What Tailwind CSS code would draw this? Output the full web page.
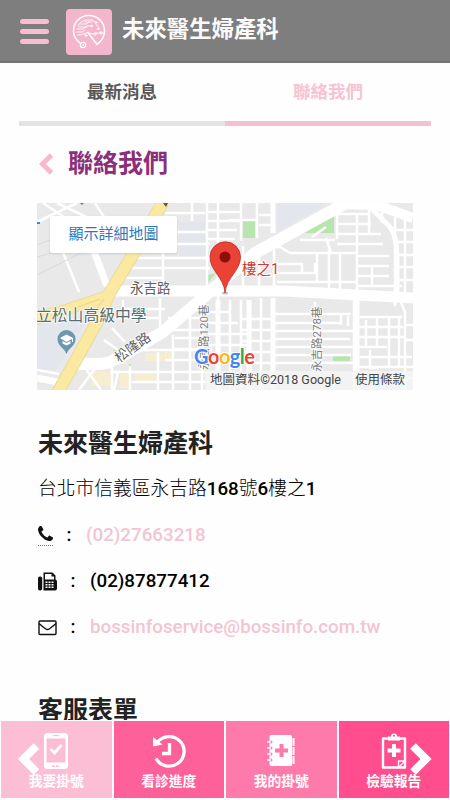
<!DOCTYPE html>
<html lang="zh-Hant">
  <head>
    <meta charset="UTF-8" />
    <meta name="viewport" content="width=device-width, initial-scale=1.0" />
    <title>未來醫生婦產科</title>
    <script src="https://cdn.jsdelivr.net/npm/@tailwindcss/browser@4"></script>
  </head>
  <body class="bg-[#fefefe] font-['Roboto','Noto_Sans_CJK_TC',sans-serif]">
    <div class="relative h-[800px] w-[450px] overflow-hidden">
      <!-- Top bar -->
      <header class="flex h-[63px] items-center border-b-2 border-[#737373] bg-[#7e7e7e] pl-5">
        <button class="mt-[2px] flex w-[29px] flex-col gap-[5px]" aria-label="選單">
          <span class="h-[5px] rounded-full bg-[#f9bdd0]"></span>
          <span class="h-[5px] rounded-full bg-[#f9bdd0]"></span>
          <span class="h-[5px] rounded-full bg-[#f9bdd0]"></span>
        </button>
        <svg class="mt-[2px] ml-[17px] h-[46px] w-[46px] rounded-[4px] bg-[#f3b6cd]" viewBox="0 0 46 46" fill="none" stroke="#fff" stroke-linecap="round" stroke-linejoin="round">
          <path stroke-width="1.500" d="M14.500 34.500C10 31 7.500 27 7.500 22C7.500 13.500 14 6.500 23 6.500C32 6.500 38.500 13.500 38.500 22C38.500 27.500 35.500 32 31 35.500L22 23.500" />
          <circle cx="17" cy="36" r="2.700" stroke-width="1.200" />
          <circle cx="17" cy="36" r=".5" stroke-width=".8" />
          <path stroke-width=".8" d="M12 17q3-6 9-6h5l3 2M11 20h6l3-3h5M11 23h5l3-2M14 15h6l3-2M12 26l6-1 4-2M22 24l6 1M30 24h4M19 13h7M13 18h8M30 15l3 4" />
          <g stroke-width=".9">
            <circle cx="30" cy="13.500" r=".8" />
            <circle cx="25.500" cy="17" r=".8" />
            <circle cx="29" cy="25" r="1.200" />
            <circle cx="35" cy="24" r="1.200" />
            <circle cx="20" cy="26.500" r="1" />
            <circle cx="32" cy="20" r=".8" />
          </g>
        </svg>
        <h1 class="-mt-1 ml-[10px] text-[22.4px] leading-8 font-bold text-[#fafafa]">未來醫生婦產科</h1>
      </header>

      <!-- Tabs -->
      <nav class="mx-[19px] grid h-[61px] grid-cols-2 text-center text-[17.5px] leading-[58px] font-bold">
        <a href="#" class="border-b-[5px] border-[#e3e3e3] text-[#585858]">最新消息</a>
        <a href="#" class="border-b-[5px] border-[#f7c0d2] text-[#f7c3d3]">聯絡我們</a>
      </nav>

      <main class="px-[37px]">
        <div class="flex h-[79px] items-center">
          <svg class="ml-px h-[22px] w-[16px]" viewBox="0 0 16 22" fill="none" stroke="#f7b9d0" stroke-width="5">
            <path d="M13.500 2L4.500 11l9 9" />
          </svg>
          <h2 class="ml-[14px] text-[25px] leading-9 font-bold text-[#8c2f7b]">聯絡我們</h2>
        </div>

        <!-- Map, drawn in page coordinates -->
        <div class="relative h-[187px] w-[376px] overflow-hidden">
          <svg class="h-[187px] w-[376px]" viewBox="37 203 376 187" fill="none">
            <rect x="37" y="203" width="376" height="187" fill="#e9e9ea" />
            <path fill="#e3e6ec" d="M179 222h27v34h-27zM277 203h52l-52 29zM37 320h50l-30 50H37z" />
            <path fill="#f7edd0" d="M113 355h14v9h-14zM92 372h20v14H92zM120 374h10v14h-10zM135 372h24v10h-24zM145 353h18v8h-18zM164 352h8v10h-8z" />
            <path fill="#b7e5ad" d="M243 220h12v18h-12zM302 233l32-19v19zM208 275l8-2-8 10zM333 354h17v7h-17zM113 350l7-2-4 9zM129 364h2v5h-2z" />

            <!-- Side streets -->
            <g stroke="#fff" stroke-width="2.500">
              <path d="M37 222l40-19M43 203l30 20M57 203l40 19M95 203l18 28M62 250l17 42" />
              <path stroke-width="1" stroke="#d9d9da" d="M37 275l50-25M80 245l-43 12M37 245l30-12" />
              <path d="M165 213h40M177 232h30M160 244h50M132 258h78M125 268h85M122 278h40M163 250v36M192 203v18M207 203v85M218 203v82" />
              <path d="M207 212h34M207 221h34M207 230h30M207 239h28M241 203v38M257 203v35M273 203v29M243 246v42M259 246v42M274 243v48M229 220h28M259 215h14M259 225h14" />
              <path d="M280 247l10 6h40M283 243l-6 5M277 264h25v10M277 273h38v-10M277 282h80M300 240h35M317 253v30M329 250v40M340 252v40M326 238l5 15h26M357 213v80M337 214v25M312 237l14-10" />
              <path d="M337 214h32M337 224h34M337 234h44M337 244h46M357 256h32M357 266h32M357 276h32M357 286h45M369 205v30M382 203v20M395 206v100M405 210v82M395 230h18M395 242h18M395 255h18M395 267h18M395 280h18M372 266v20" />
              <path d="M123 300v10l10 8M123 309h42M115 318h45M160 298v35M168 318h38M160 330h45M175 338h32M172 349h40M136 350h76M165 360h45M110 372h105M132 382h80M112 328l13 14M104 340l14 10M173 335v55M190 315v75M202 303v87M158 352v38M130 366v24M112 366v24M118 372l-4 18M97 366l-18 24M83 365l18 25M37 370l22 4" />
              <path d="M218 296v94M230 300v90M241 300v90M250 302v88M261 298v92M208 312h23M208 323h30M208 334h40M208 345h42M241 319h32M241 330h32M241 341h32M241 352h32M241 363h32" />
              <path d="M273 314h78M273 323h68M273 331h80M273 339h77M273 347h81M273 355h78M273 363h80M315 302v61M341 315v10M354 298v92M348 316v10" />
              <path d="M357 317h45M357 327h46M357 337h47M357 347h30M357 357h55M357 367h56M366 320v26M377 318v30M389 318v32M370 350v18h8M389 350v18M399 318v50M400 300l5 12v78M406 325h7M406 340h7M357 378h56" />
            </g>

            <!-- Wider roads -->
            <g stroke="#fff" stroke-linejoin="round">
              <path stroke-width="5" d="M218 300v90M249 300v90M273 298v92M357 296v94M273 203v30" />
              <path stroke-width="7" d="M83 222l24 64M37 378l25 5" />
              <path stroke-width="5" d="M370 207l20 20q7 9 7 30v40" />
              <path stroke-width="11" d="M115 291h170l128 7" />
              <path stroke-width="12" d="M77 364h21q10 0 18-5l47-27 42-36 50-43 82-45 15-9" />
              <path stroke-width="10" d="M335 204l42 1 36 13" />
            </g>

            <!-- Highway -->
            <path stroke="#eadb9c" stroke-width="13" d="M163 202l-31 54-23 38-8 21-44 79" />
            <path fill="#eadb9c" d="M37 311l28-7 30-10 18-6-10 22-14-2-25 9-27 8z" />
            <path stroke="#fbe9a2" stroke-width="11" d="M163 202l-31 54-23 38-8 21-44 79" />
            <path fill="#fbe9a2" d="M37 312l28-7 30-10 18-6-10 20-14-2-25 9-27 8z" />
            <path stroke="#e8d58c" d="M104 299l-15 20M100 299l-22 8" />
            <path fill="#76502c" d="M163 203h5l-2 4z" />
            <path fill="#4b84c4" d="M80 203h4l-2 2zM37 222h3v2h-3z" />

            <!-- School marker -->
            <path fill="#6c97b0" d="M66.500 354c-2-6-9-8-9-15a9 9 0 0 1 18 0c0 7-7 9-9 15z" />
            <path fill="#fff" d="M60 338l6.500-3.500 6.500 3.500v4h-1v-3l-5.500 3zM62.500 341l4 2 4-2v2.500l-4 2-4-2z" />

            <!-- Map labels -->
            <g fill="#616161" stroke="#fff" stroke-width="2" stroke-opacity=".7" paint-order="stroke" font-size="13.500">
              <text x="130" y="293">永吉路</text>
              <text x="36" y="321" font-size="15.800" fill="#546e7a">立松山高級中學</text>
              <text transform="translate(119 363) rotate(-36)">松隆路</text>
              <text transform="translate(208 370) rotate(-90)" font-size="11.500" fill="#808080">永吉路120巷</text>
              <text transform="translate(320.500 372) rotate(-90)" font-size="11.500" fill="#808080">永吉路278巷</text>
            </g>
            <text x="242" y="274" font-size="14.500" fill="#cf3b35" stroke="#fff" stroke-width="2" paint-order="stroke">樓之1</text>

            <!-- Pin -->
            <ellipse cx="225" cy="293" rx="3" ry="1.500" fill="#999" fill-opacity=".6" />
            <path fill="#ea4335" stroke="#b9302a" stroke-width=".8" d="M225 293c-1-16-15-22-15-36a15 15 0 0 1 30.500 0c0 14-14 20-15.500 36z" />
            <circle cx="225" cy="257" r="5.500" fill="#8b0f0b" />

            <text x="194" y="364" font-size="20" font-weight="700" font-family="Lato, sans-serif" stroke="#fff" stroke-width="2" paint-order="stroke" textLength="61"><tspan fill="#4285f4">G</tspan><tspan fill="#ea4335">o</tspan><tspan fill="#fbbc05">o</tspan><tspan fill="#4285f4">g</tspan><tspan fill="#34a853">l</tspan><tspan fill="#ea4335">e</tspan></text>

            <rect x="205" y="371" width="208" height="19" fill="#f5f5f5" fill-opacity=".8" />
            <g font-size="12.500" fill="#444">
              <text x="210" y="384" textLength="131">地圖資料©2018 Google</text>
              <text x="355" y="384" textLength="50">使用條款</text>
            </g>
          </svg>
          <a href="#" class="absolute top-[13px] left-[13px] flex h-[37px] w-[127px] items-center justify-center rounded-[2px] bg-white text-[15px] text-[#2b78bd] shadow">顯示詳細地圖</a>
        </div>

        <!-- Clinic details -->
        <h2 class="mt-[35px] ml-px text-[25px] leading-[38px] font-bold text-[#222]">未來醫生婦產科</h2>
        <div class="ml-px text-[18.75px] font-medium text-black">
          <p class="mt-[8px] h-[37px] leading-[37px]"><span class="font-light">台北市信義區永吉路</span>168<span class="font-light">號</span>6<span class="font-light">樓之</span>1</p>
          <p class="mt-[4px] flex h-[46px] items-center">
            <span class="flex h-[22px] w-[15px] items-start border-b border-dotted border-[#777]">
              <svg class="mt-[2px] h-[15px] w-[15px]" viewBox="0 0 1408 1408" fill="#111"><path d="M1408 1112q0 27-10 70.500t-21 68.500q-21 50-122 106-94 51-186 51-27 0-53-3.500t-57.500-12.500-47-14.500T856 1357t-49-18q-98-35-175-83-127-79-264-216T152 776q-48-77-83-175-3-9-18-49t-20.500-55.500-14.500-47T3.500 392 0 339q0-92 51-186Q107 52 157 31q25-11 68.500-21T296 0q14 0 21 3 18 6 53 76 11 19 30 54t35 63.500 31 53.500q3 4 17.500 25t21.500 35.500 7 28.500q0 20-28.500 50t-62 55-62 53-28.500 46q0 9 5 22.500t8.500 20.500 14 24 11.500 19q76 137 174 235t235 174q2 1 19 11.500t24 14 20.500 8.500 22.500 5q18 0 46-28.500t53-62 55-62 50-28.500q14 0 28.500 7t35.500 21.500 25 17.500q25 15 53.500 31t63.500 35 54 30q70 35 76 53 3 7 3 21z" /></svg>
            </span>
            <span class="ml-[6px] w-[20px] text-center">:</span>
            <a href="tel:0227663218" class="ml-[7px] text-[#f3c4d3]">(02)27663218</a>
          </p>
          <p class="flex h-[46px] items-center">
            <svg class="h-[19px] w-[19px]" viewBox="0 0 19 19" fill="#111">
              <rect x="0" y="4.500" width="4.200" height="14" rx="1.800" />
              <path fill-rule="evenodd" d="M5.500.5h9l3 3v4q1.500.5 1.500 2v7q0 2-2 2H5.500zM7 2v5.500h9V4.500h-2.500V2z" />
              <path fill="#fff" d="M7.500 9.500h2v1.500h-2zM10.500 9.500h2v1.500h-2zM13.500 9.500h2v1.500h-2zM7.500 12h2v1.500h-2zM10.500 12h2v1.500h-2zM13.500 12h2v1.500h-2zM7.500 14.500h2V16h-2zM10.500 14.500h2V16h-2zM13.500 14.500h2V16h-2z" />
            </svg>
            <span class="ml-[6px] w-[20px] text-center">:</span>
            <span class="ml-[7px]">(02)87877412</span>
          </p>
          <p class="flex h-[46px] items-center">
            <svg class="mt-[2px] h-[16px] w-[19px]" viewBox="0 0 19 16" fill="none" stroke="#111" stroke-width="1.400">
              <rect x="1" y="1" width="17" height="13.500" rx="1" />
              <path d="M1 3.500q4 3.500 6.500 5.300 2 1.500 4 0Q14 7 18 3.500" />
            </svg>
            <span class="ml-[6px] w-[20px] text-center">:</span>
            <a href="mailto:bossinfoservice@bossinfo.com.tw" class="ml-[7px] text-[#f3c4d3]">bossinfoservice@bossinfo.com.tw</a>
          </p>
        </div>
        <h2 class="mt-[42px] ml-px text-[25px] leading-[38px] font-bold text-[#222]">客服表單</h2>
      </main>

      <!-- Bottom menu -->
      <footer class="absolute bottom-0 left-0 grid h-[80px] w-full grid-cols-4 gap-[2px] bg-[#fefefe] px-px pt-px pb-[2px] text-[13.75px] leading-5 font-bold text-white">
        <a href="#" class="flex flex-col items-center bg-[#fcbed4] pt-[11px]">
          <svg class="h-[38px] w-[26px]" viewBox="0 0 26 38">
            <rect x="1" y="1" width="24" height="36" rx="3.500" fill="#fff" />
            <path fill="#fcbed4" d="M3.500 6.500h19v24h-19zM10 3h6v1.200h-6zM9 33.500h3V35H9zM13 33.500h3V35h-3z" />
            <path fill="none" stroke="#fff" stroke-width="2.800" d="M7.500 17l4 4 7-8" />
          </svg>
          <span class="mt-px">我要掛號</span>
        </a>
        <a href="#" class="flex flex-col items-center bg-[#fe6099] pt-[11px]">
          <svg class="h-[38px] w-[38px]" viewBox="0 0 38 38" fill="none" stroke="#fff">
            <path stroke-width="3.300" d="M7.500 10A15 14.800 0 1 1 6 26.500" />
            <path fill="#fff" stroke="none" d="M3 5v9.500l9.500-2z" />
            <path stroke-width="3.300" d="M19.500 11v10.500h-7.500" />
          </svg>
          <span class="mt-px">看診進度</span>
        </a>
        <a href="#" class="flex flex-col items-center bg-[#fd7aaa] pt-[11px]">
          <svg class="h-[38px] w-[30px]" viewBox="0 0 30 38" fill="#fff">
            <path d="M5 3h19q2 0 2 2v29H5q-1.500 0-1.500-2V5q0-2 1.500-2z" />
            <path d="M26.500 6h2v8h-2zM26.500 15h2v8h-2zM26.500 24h2v8h-2z" />
            <g fill="#fd7aaa"><circle cx="5" cy="10" r="1.500" /><circle cx="5" cy="16" r="1.500" /><circle cx="5" cy="22" r="1.500" /><circle cx="5" cy="28" r="1.500" /></g>
            <path fill="none" stroke="#fff" stroke-width="1.500" d="M1 10h4M1 16h4M1 22h4M1 28h4" />
            <path fill="#fd7aaa" d="M13.500 12h4v4.500H22v4h-4.500V25h-4v-4.500H9v-4h4.500z" />
          </svg>
          <span class="mt-px">我的掛號</span>
        </a>
        <a href="#" class="flex flex-col items-center bg-[#ff4d8e] pt-[11px]">
          <svg class="h-[38px] w-[26px]" viewBox="0 0 26 38">
            <path fill="none" stroke="#fff" stroke-width="2.400" stroke-linejoin="round" d="M2 6.500h22v29H2z" />
            <path fill="#fff" d="M7 4.500h3a3 3 0 0 1 6 0h3v4H7zM11 12h4v4.500h4.500v4H15V25h-4v-4.500H6.500v-4H11z" />
            <circle cx="13" cy="3.800" r="1" fill="#ff4d8e" />
            <path fill="none" stroke="#fff" stroke-width="1.300" d="M17.500 35v-6H24M18 35l6-6" />
          </svg>
          <span class="mt-px">檢驗報告</span>
        </a>
      </footer>

      <!-- Carousel arrows over the menu -->
      <svg class="absolute top-[742px] left-[17px] h-[34px] w-[24px]" viewBox="0 0 24 34" fill="none" stroke="#fff" stroke-width="8">
        <path d="M19.500 4L6.500 17l13 13" />
      </svg>
      <svg class="absolute top-[742px] left-[409px] h-[34px] w-[24px]" viewBox="0 0 24 34" fill="none" stroke="#fff" stroke-width="8">
        <path d="M4 4l13 13L4 30" />
      </svg>
    </div>
  </body>
</html>
